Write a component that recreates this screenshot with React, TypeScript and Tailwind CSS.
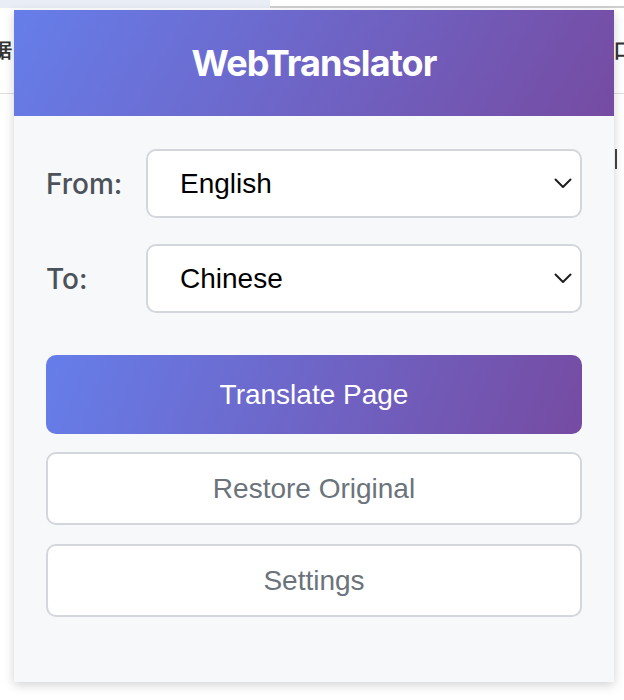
import React, { useState } from 'react';

const LANGS_FROM = ['English', 'Chinese', 'Japanese', 'French'];
const LANGS_TO = ['Chinese', 'English', 'Japanese', 'French'];

function Chevron() {
  return (
    <svg width="18" height="11" viewBox="0 0 18 11" fill="none" className="shrink-0">
      <path d="M1.5 1.5L9 9L16.5 1.5" stroke="#1f1f1f" strokeWidth="2" strokeLinecap="round" strokeLinejoin="round" />
    </svg>
  );
}

function LangRow({ label, value }: { label: string; value: string }) {
  return (
    <div className="flex items-center">
      <span className="w-[100px] shrink-0 font-['Inter',sans-serif] text-[28px] font-medium text-[#4b5259]">{label}</span>
      <div className="box-border flex h-[69px] flex-1 items-center justify-between rounded-[10px] border-2 border-[#d3d7dc] bg-white pl-[32px] pr-[8px]">
        <span className="text-[28px] text-black">{value}</span>
        <Chevron />
      </div>
    </div>
  );
}

export default function App() {
  const [from] = useState(LANGS_FROM[0]);
  const [to] = useState(LANGS_TO[0]);

  return (
    <div className="relative h-[700px] w-[624px] overflow-hidden bg-white font-['Liberation_Sans',Arial,sans-serif]">
      {/* page behind the popup */}
      <div className="flex h-[8px] w-full">
        <div className="w-[270px] bg-[#e9edf5]" />
        <div className="flex-1 border-b-2 border-[#d0d0d0] bg-white" />
      </div>
      <div className="mt-[27px] flex justify-between text-[20px] font-bold text-[#333]">
        <span className="-ml-[8px]">据</span>
        <span className="-mr-[10px]">口</span>
      </div>
      <div className="mt-[28px] h-px w-full bg-[#dedede]" />
      <div className="mr-[7px] mt-[55px] ml-auto h-[20px] w-[2px] bg-[#444]" />

      {/* extension popup */}
      <div className="absolute left-[14px] top-[10px] w-[600px] bg-[#f7f8fa] shadow-[0_3px_10px_rgba(0,0,0,0.18)]">
        <div className="flex h-[106px] items-center justify-center bg-[linear-gradient(120deg,#667eea_0%,#764ba2_100%)]">
          <h1 className="font-['Inter',sans-serif] text-[36px] font-bold tracking-tight text-white">WebTranslator</h1>
        </div>

        <div className="flex flex-col px-[32px] pt-[33px] pb-[65px]">
          <div className="flex flex-col gap-[26px]">
            <LangRow label="From:" value={from} />
            <LangRow label="To:" value={to} />
          </div>

          <button className="mt-[42px] h-[79px] rounded-[10px] bg-[linear-gradient(110deg,#667eea_0%,#764ba2_100%)] text-[28px] text-white">
            Translate Page
          </button>
          <button className="mt-[18px] h-[73px] rounded-[10px] border-2 border-[#d3d7dc] bg-white text-[28px] text-[#6b737b]">
            Restore Original
          </button>
          <button className="mt-[19px] h-[73px] rounded-[10px] border-2 border-[#d3d7dc] bg-white text-[28px] text-[#6b737b]">
            Settings
          </button>
        </div>
      </div>
    </div>
  );
}
